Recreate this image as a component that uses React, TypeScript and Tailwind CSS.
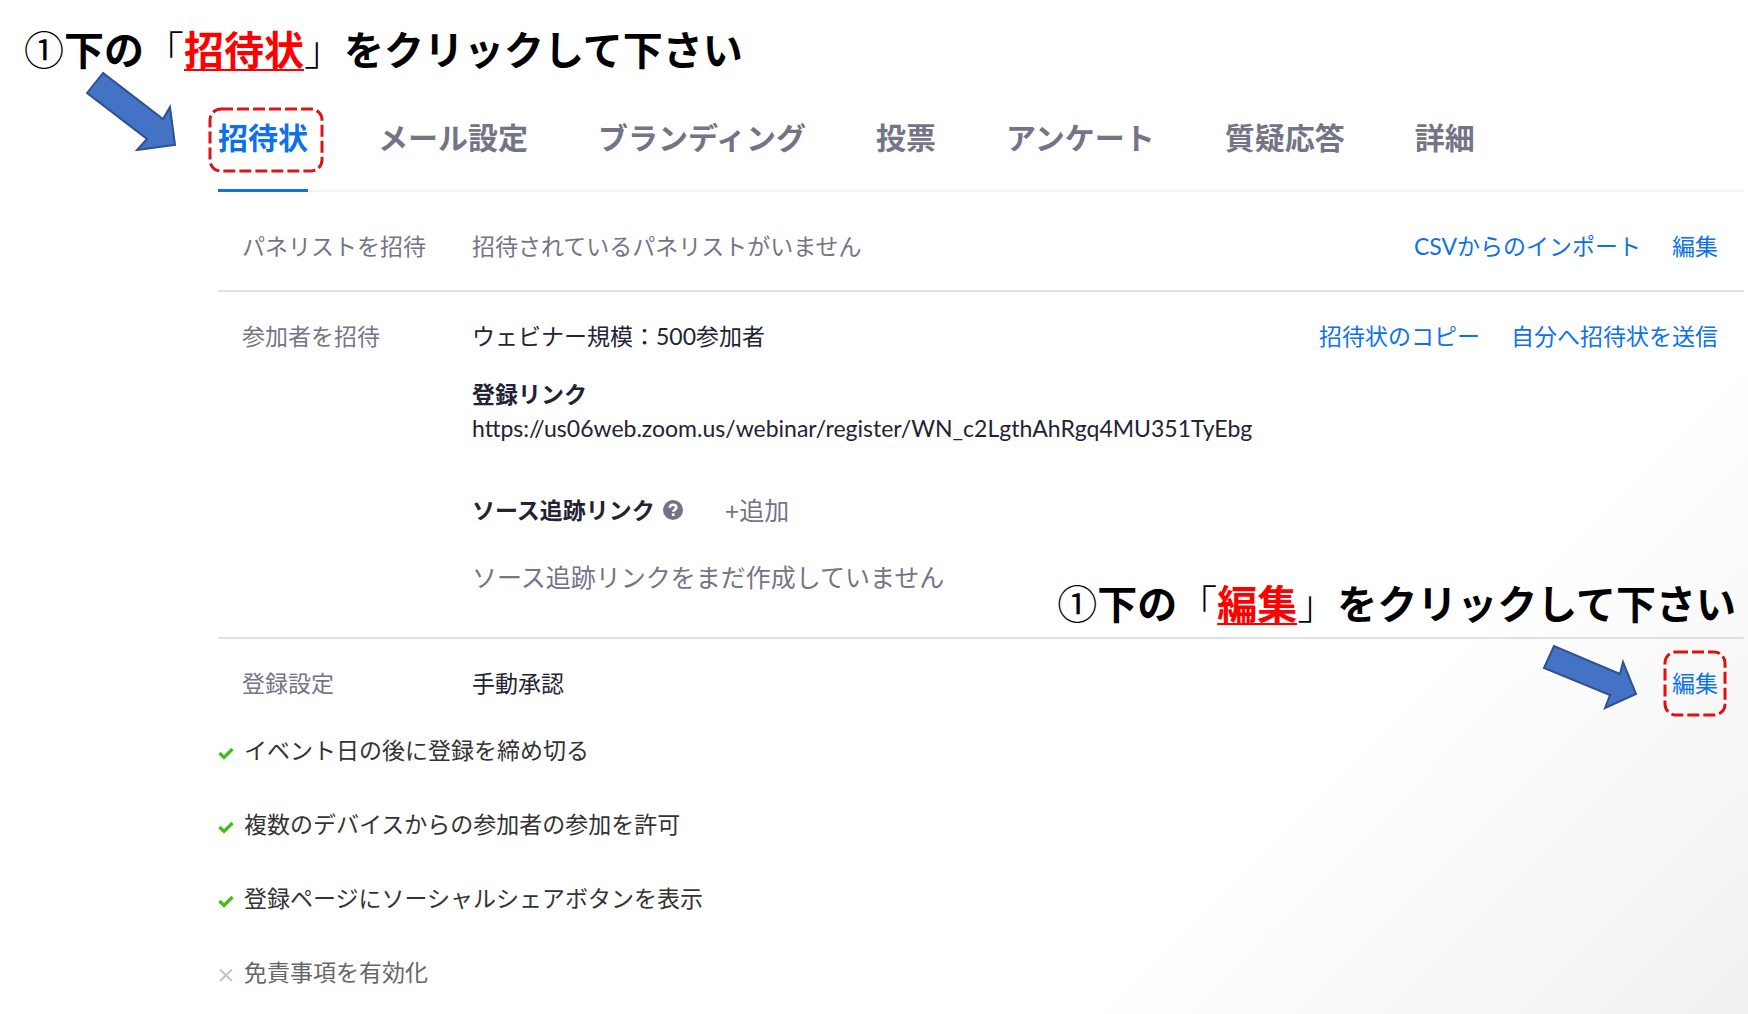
import React from "react";

const TABS = ["招待状", "メール設定", "ブランディング", "投票", "アンケート", "質疑応答", "詳細"];

const OPTIONS = [
  { label: "イベント日の後に登録を締め切る", on: true },
  { label: "複数のデバイスからの参加者の参加を許可", on: true },
  { label: "登録ページにソーシャルシェアボタンを表示", on: true },
  { label: "免責事項を有効化", on: false },
];

function Callout({ word }: { word: string }) {
  return (
    <h2 className="whitespace-nowrap font-['Noto_Sans_CJK_JP',sans-serif] text-[40px] leading-[50px] font-bold text-black">
      <span className="font-normal">①</span>下の<span className="font-light">「</span>
      <span className="text-[#ff0000] underline decoration-2 underline-offset-4">{word}</span>
      <span className="font-light">」</span>をクリックして下さい
    </h2>
  );
}

function DashedFrame({ color }: { color: string }) {
  return (
    <svg className="h-full w-full overflow-visible" fill="none" aria-hidden="true">
      <rect width="100%" height="100%" rx="11" stroke={color} strokeWidth="3" strokeDasharray="12 4" />
    </svg>
  );
}

function Row({ label, children, links }: { label: string; children: React.ReactNode; links: React.ReactNode }) {
  return (
    <div className="flex pl-6 pr-[26px]">
      <div className="w-[230px] shrink-0 text-[#747487]">{label}</div>
      <div className="grow">{children}</div>
      <div className="flex shrink-0 items-start gap-[31px] text-[#0e71eb]">{links}</div>
    </div>
  );
}

export default function App() {
  return (
    <div
      lang="ja"
      className="min-h-screen overflow-hidden bg-white bg-[linear-gradient(135deg,#ffffff_76%,#f0f0f0_100%)] pt-[23px] font-[Lato,'Noto_Sans_CJK_JP',sans-serif] text-[23px] leading-8 text-[#232333]"
    >
      <header className="relative pl-6">
        <Callout word="招待状" />
        <svg className="absolute left-[86px] top-12 h-20 w-[92px]" viewBox="86 70 92 80" aria-hidden="true">
          <path d="M103 72 87 92 147 138 137 149 175 144 170 106 163 118Z" fill="#4472c4" stroke="#2f528f" strokeWidth="2" />
        </svg>
      </header>

      <main className="ml-[218px] mr-1">
        <nav className="mt-[34px] flex gap-[70px] border-b-2 border-[#f3f3f9] text-[30px] font-bold text-[#747487]">
          {TABS.map((tab, i) => (
            <button
              key={tab}
              type="button"
              className={
                i === 0
                  ? "relative -mb-0.5 h-[85px] border-b-3 border-[#0e71eb] pb-[22px] text-[#0e71eb]"
                  : "h-[82px] pb-[22px]"
              }
            >
              {tab}
              {i === 0 && (
                <span className="absolute -left-2 -right-[14px] top-0.5 h-[62px]">
                  <DashedFrame color="#d8141c" />
                </span>
              )}
            </button>
          ))}
        </nav>

        <section className="border-b-2 border-[#e0e0e0] pb-7 pt-[38px]">
          <Row
            label="パネリストを招待"
            links={
              <>
                <a href="#import">CSVからのインポート</a>
                <a href="#edit-panelists">編集</a>
              </>
            }
          >
            <p className="text-[#747487]">招待されているパネリストがいません</p>
          </Row>
        </section>

        <section className="border-b-2 border-[#e0e0e0] pb-11 pt-7">
          <Row
            label="参加者を招待"
            links={
              <>
                <a href="#copy">招待状のコピー</a>
                <a href="#send">自分へ招待状を送信</a>
              </>
            }
          >
            <p>ウェビナー規模：500参加者</p>
            <h3 className="mt-[26px] font-bold">登録リンク</h3>
            <p className="mt-0.5">https://us06web.zoom.us/webinar/register/WN_c2LgthAhRgq4MU351TyEbg</p>
            <div className="mt-[50px] flex items-center">
              <h3 className="font-bold">ソース追跡リンク</h3>
              <svg className="ml-2 size-5" viewBox="0 0 20 20" role="img" aria-label="ヘルプ">
                <circle cx="10" cy="10" r="10" fill="#747487" />
                <path d="M6.8 7.8C6.8 5.8 8.2 4.8 10 4.8s3.3 1.1 3.3 2.8c0 2.2-3 2.1-3 4.2" fill="none" stroke="#fff" strokeWidth="2.6" />
                <rect x="8.9" y="13.4" width="2.7" height="2.6" fill="#fff" />
              </svg>
              <button type="button" className="ml-[42px] text-[25px] leading-8 text-[#747487]">
                +追加
              </button>
            </div>
            <p className="mt-[35px] text-[25px] leading-8 text-[#747487]">ソース追跡リンクをまだ作成していません</p>
          </Row>
        </section>

        <section className="relative pt-7">
          <div className="absolute -top-[62px] right-2">
            <Callout word="編集" />
          </div>
          <svg className="absolute right-[106px] top-[5px] h-[66px] w-[96px]" viewBox="1542 643 96 66" aria-hidden="true">
            <path d="M1554 645 1544 667 1610 694 1605 707 1636 693 1623 661 1620 673Z" fill="#4472c4" stroke="#2f528f" strokeWidth="2" />
          </svg>
          <Row
            label="登録設定"
            links={
              <a href="#edit-registration" className="relative">
                編集
                <span className="absolute -inset-x-[7px] -bottom-4 -top-[15px]">
                  <DashedFrame color="#e01010" />
                </span>
              </a>
            }
          >
            <p>手動承認</p>
          </Row>
          <ul className="mt-[35px] flex flex-col gap-[42px] text-[#333333]">
            {OPTIONS.map((o) => (
              <li key={o.label} className={o.on ? "flex items-center gap-[10px]" : "flex items-center gap-[10px] text-[#666666]"}>
                <svg className="mt-1.5 size-4" viewBox="0 0 16 16" fill="none" aria-hidden="true">
                  {o.on ? (
                    <path d="M1.5 8 6 12.5 14.5 4" stroke="#3fbf14" strokeWidth="3.2" />
                  ) : (
                    <path d="M2 2.5 14 14M14 2.5 2 14" stroke="#c4c4c4" strokeWidth="2" />
                  )}
                </svg>
                {o.label}
              </li>
            ))}
          </ul>
        </section>
      </main>
    </div>
  );
}
